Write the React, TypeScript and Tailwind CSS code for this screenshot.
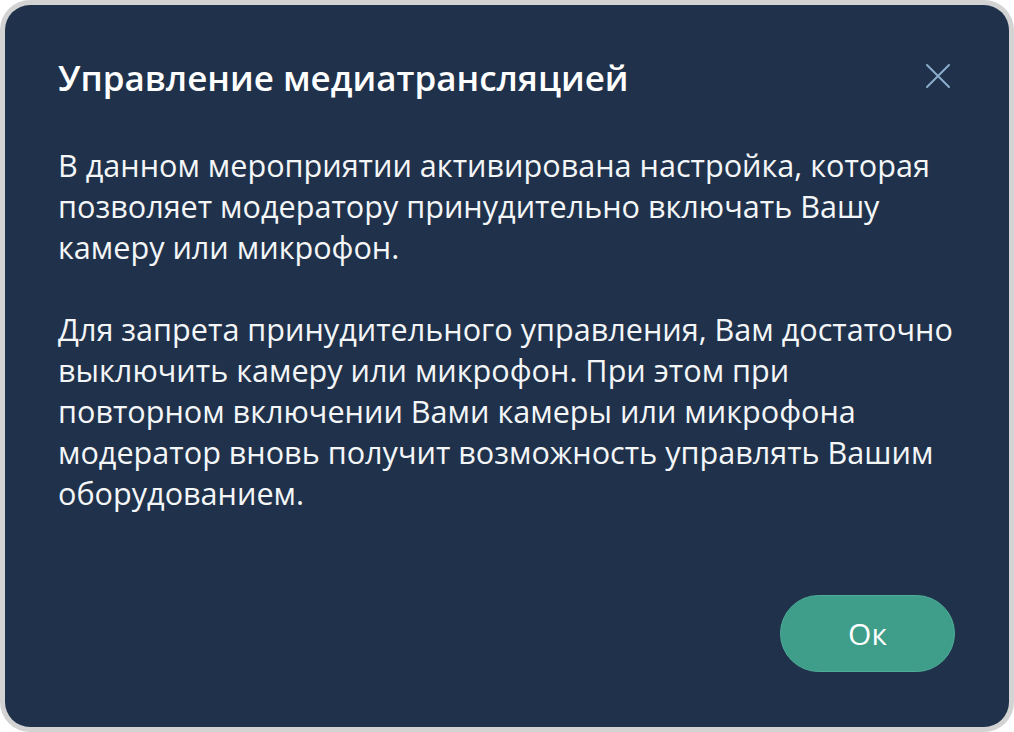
const App = () => {
  return (
    <div className="w-[1014px] h-[732px] bg-white">
      <div className="w-full h-full rounded-[30px] bg-[#d3d3d3] p-[5px]">
        <div
          className="flex flex-col w-full h-full rounded-[25px] bg-[#20324b] text-white pl-[53px] pr-[54px] pt-[48px] pb-[55px]"
          style={{ fontFamily: '"Open Sans", "Noto Sans", sans-serif' }}
        >
          <div className="flex items-start justify-between">
            <h1 className="text-[35px] leading-[50px] font-semibold">Управление медиатрансляцией</h1>
            <button className="mt-[7px] mr-[1px] w-[32px] h-[32px] flex items-center justify-center text-[#8badcc]">
              <svg width="26" height="26" viewBox="0 0 26 26" fill="none" stroke="currentColor" strokeWidth="2" strokeLinecap="round">
                <path d="M2 2L24 24M24 2L2 24" />
              </svg>
            </button>
          </div>
          <div className="mt-[42px] text-[30.6px] leading-[41px] text-[#f4f6f8]">
            <p>
              В данном мероприятии активирована настройка, которая позволяет модератору принудительно включать Вашу
              камеру или микрофон.
            </p>
            <p className="mt-[41px]">
              Для запрета принудительного управления, Вам достаточно выключить камеру или микрофон. При этом при
              повторном включении Вами камеры или микрофона модератор вновь получит возможность управлять Вашим
              оборудованием.
            </p>
          </div>
          <div className="mt-auto flex justify-end">
            <button className="w-[175px] h-[77px] rounded-full bg-[#3e9e8a] border border-[#4fae98] text-[30px] text-white">
              Ок
            </button>
          </div>
        </div>
      </div>
    </div>
  );
};

export default App;
